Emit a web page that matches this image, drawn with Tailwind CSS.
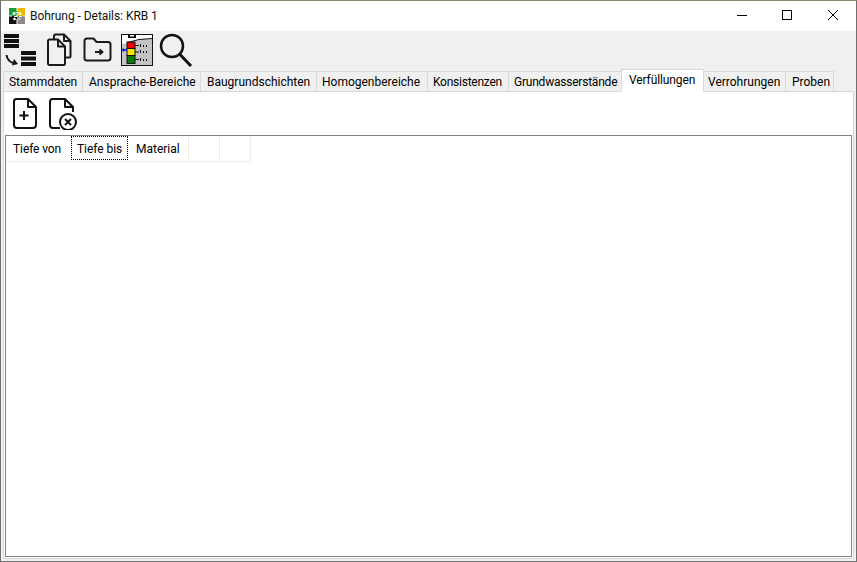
<!DOCTYPE html>
<html>
  <head>
    <title>Bohrung - Details: KRB 1</title>
    <script src="https://cdn.jsdelivr.net/npm/@tailwindcss/browser@4"></script>
  </head>
  <body class="bg-white">
    <div class="w-[857px] h-[562px] overflow-hidden flex flex-col border border-[#707070] border-t-[#8a8a6a] bg-[#f0f0f0] text-[12px] leading-[16px] text-black font-['Roboto',sans-serif]">
      <!-- title bar -->
      <div class="h-[30px] shrink-0 bg-white flex items-center">
        <svg class="ml-[8px] -mt-[1px] w-[16px] h-[16px]" viewBox="0 0 16 16">
          <rect x="0" y="0" width="8" height="8" fill="#1f9a3c"/>
          <rect x="8" y="0" width="8" height="8" fill="#f2b705"/>
          <rect x="0" y="8" width="8" height="8" fill="#111"/>
          <rect x="8" y="8" width="8" height="8" fill="#8a8a8a"/>
          <path d="M8 0v3M6.500 4.500h3M8 6v2.500M8 8.500h-3M3 8h-3M8 11v5M10 8.500h3M14.500 8h1.500" stroke="#fff" fill="none"/>
          <circle cx="5" cy="5.500" r="1.500" fill="#fff"/>
          <circle cx="11" cy="5.500" r="1.500" fill="#fff"/>
          <circle cx="5.500" cy="11" r="1.300" fill="#fff"/>
          <circle cx="10.500" cy="11" r="1.300" fill="#c9c9c9"/>
        </svg>
        <span class="ml-[5px] -mt-[1px] text-[12px] tracking-[-0.05px] text-[#111]">Bohrung - Details: KRB 1</span>
        <div class="ml-auto flex items-center">
          <svg class="w-[46px] h-[30px]" viewBox="0 0 46 30"><path d="M19 14.500h10" stroke="#000" fill="none"/></svg>
          <svg class="w-[46px] h-[30px]" viewBox="0 0 46 30"><rect x="18.500" y="9.500" width="9" height="9" stroke="#000" fill="none"/></svg>
          <svg class="w-[46px] h-[30px]" viewBox="0 0 46 30"><path d="M18 9l10 10M28 9l-10 10" stroke="#000" fill="none"/></svg>
        </div>
      </div>

      <!-- main toolbar -->
      <div class="h-[39px] shrink-0 flex items-start pl-[3px] pt-[2px]">
        <svg class="w-[33px] h-[34px]" viewBox="0 0 33 34" fill="#111">
          <rect x="0" y="1" width="15" height="4"/><rect x="0" y="6" width="15" height="4"/><rect x="0" y="11" width="15" height="4"/>
          <rect x="17" y="18" width="15" height="4"/><rect x="17" y="23.500" width="15" height="4"/><rect x="17" y="29" width="15" height="4"/>
          <path d="M2.500 22c.5 4 3 7 8 8.500" fill="none" stroke="#111" stroke-width="2"/>
          <path d="M10 26l4 5-6 1.500z"/>
        </svg>
        <svg class="w-[32px] h-[34px] ml-[8px]" viewBox="0 0 32 34" fill="none" stroke="#1a1a1a" stroke-width="2" stroke-linejoin="round">
          <path d="M9 6V3a1.500 1.500 0 0 1 1.500-1.500H19l6.500 6.500v15a1.500 1.500 0 0 1-1.500 1.500h-3.500"/>
          <path d="M19 1.500V8h6.500"/>
          <path d="M3 8a1.500 1.500 0 0 1 1.500-1.500H13l7 7v17a1.500 1.500 0 0 1-1.500 1.500h-14A1.500 1.500 0 0 1 3 31z" fill="#f0f0f0"/>
          <path d="M13 6.500V13.500h7"/>
        </svg>
        <svg class="w-[32px] h-[34px] ml-[4px]" viewBox="0 0 32 34" fill="none" stroke="#1a1a1a" stroke-width="2" stroke-linejoin="round">
          <path d="M3.500 8a2.500 2.500 0 0 1 2.500-2.500h6.500l3 3.500h11.500a2.500 2.500 0 0 1 2.500 2.500v13.500a2.500 2.500 0 0 1-2.500 2.500H6a2.500 2.500 0 0 1-2.500-2.500z"/>
          <path d="M14 19h7M18.500 16.500l3 2.500-3 2.500"/>
        </svg>
        <svg class="w-[32px] h-[32px] ml-[8px] mt-[1px]" viewBox="0 0 32 32">
          <rect x="0.500" y="0.500" width="31" height="31" fill="#fff" stroke="#111" stroke-width="1"/>
          <path d="M1 10l10-2 8-3h12v26H1z" fill="#c4c4c4"/>
          <path d="M6 8.500l12-3 13-1" stroke="#111" fill="none"/>
          <path d="M7 1h8v3H7z" fill="#111"/><path d="M9 1h4v1.500H9z" fill="#fff"/>
          <rect x="6" y="8" width="8" height="6.500" fill="#f00000" stroke="#111"/>
          <rect x="6" y="14.500" width="8" height="7" fill="#f5e600" stroke="#111"/>
          <rect x="6" y="21.500" width="8" height="8" fill="#0a7a0a" stroke="#111"/>
          <path d="M14 11.500h4M14 18h4M14 25.500h4" stroke="#111"/>
          <path d="M1 16h5M2.500 14.500v3" stroke="#1010e0" stroke-width="1.500" fill="none"/>
          <path d="M19 10h1v3h-1zM22 11h1v2h-1zM25 11h1v2h-1zM19 16h1v3h-1zM22 17h1v2h-1zM25 17h1v2h-1zM19 24h1v3h-1zM22 25h1v2h-1zM25 25h1v2h-1z" fill="#111"/>
        </svg>
        <svg class="w-[34px] h-[34px] ml-[6px]" viewBox="0 0 34 34" fill="none" stroke="#111">
          <circle cx="13" cy="13" r="11" stroke-width="2.500"/>
          <path d="M20.500 21l11.500 12" stroke-width="3"/>
        </svg>
      </div>

      <!-- tabs -->
      <div class="h-[21px] shrink-0 flex items-end pl-[2px] relative z-10">
        <div class="h-[20px] pl-[5px] pt-[2px] w-[80px] border border-b-0 border-[#d9d9d9] whitespace-nowrap tracking-[-0.08px]">Stammdaten</div>
        <div class="h-[20px] pl-[6px] pt-[2px] w-[118px] border-r border-t border-[#d9d9d9] whitespace-nowrap">Ansprache-Bereiche</div>
        <div class="h-[20px] pl-[6px] pt-[2px] w-[116px] border-r border-t border-[#d9d9d9] whitespace-nowrap">Baugrundschichten</div>
        <div class="h-[20px] pl-[5px] pt-[2px] w-[111px] border-r border-t border-[#d9d9d9] whitespace-nowrap">Homogenbereiche</div>
        <div class="h-[20px] pl-[5px] pt-[2px] w-[81px] border-r border-t border-[#d9d9d9] whitespace-nowrap tracking-[-0.25px]">Konsistenzen</div>
        <div class="h-[20px] pl-[5px] pt-[2px] w-[112px] border-t border-[#d9d9d9] whitespace-nowrap tracking-[-0.22px]">Grundwasserstände</div>
        <div class="h-[23px] -mb-[1px] pl-[7px] pt-[2px] w-[83px] bg-white border border-b-0 border-[#d9d9d9] whitespace-nowrap relative z-10 tracking-[-0.1px]">Verfüllungen</div>
        <div class="h-[20px] pl-[4px] pt-[2px] w-[82px] border-r border-t border-[#d9d9d9] whitespace-nowrap">Verrohrungen</div>
        <div class="h-[20px] pl-[6px] pt-[2px] w-[48px] border-r border-t border-[#d9d9d9] whitespace-nowrap">Proben</div>
      </div>

      <!-- tab page -->
      <div class="flex-1 min-h-0 mx-[2px] mb-[2px] bg-white border border-[#d9d9d9] flex flex-col">
        <div class="h-[43px] shrink-0 flex items-start pl-[4px] pt-[4px] gap-[3px]">
          <svg class="w-[34px] h-[34px]" viewBox="0 0 34 34" fill="none" stroke="#111" stroke-width="2" stroke-linejoin="round">
            <path d="M6 5.500a2.500 2.500 0 0 1 2.500-2.500H20l8 8v18a3 3 0 0 1-3 3H9a3 3 0 0 1-3-3z"/>
            <path d="M20 3v8h8"/>
            <path d="M11.500 19.500h9M16 15v9"/>
          </svg>
          <svg class="w-[34px] h-[34px]" viewBox="0 0 34 34" fill="none" stroke="#111" stroke-width="2" stroke-linejoin="round">
            <path d="M8 32a3 3 0 0 1-3-3V5.500A2.500 2.500 0 0 1 7.500 3H20l8 8v5"/>
            <path d="M20 3v8h8"/>
            <path d="M8 32h7"/>
            <circle cx="23" cy="26" r="8"/>
            <path d="M20 23l6 6M26 23l-6 6"/>
          </svg>
        </div>
        <div class="flex-1 min-h-0 mx-[1px] mb-[1px] border border-[#828282]">
          <div class="flex h-[26px] border-b border-[#ececec] w-fit items-stretch">
            <div class="w-[66px] pl-[7px] pt-[5px] tracking-[-0.1px] border-r border-[#ececec]">Tiefe von</div>
            <div class="w-[57px] pl-[5px] pt-[4px] border border-dotted border-black -ml-[1px] h-[24px] tracking-[-0.05px]">Tiefe bis</div>
            <div class="w-[61px] pl-[8px] pt-[5px] border-r border-[#ececec]">Material</div>
            <div class="w-[31px] border-r border-[#ececec]"></div>
            <div class="w-[31px] border-r border-[#ececec]"></div>
          </div>
        </div>
      </div>
    </div>
  </body>
</html>
